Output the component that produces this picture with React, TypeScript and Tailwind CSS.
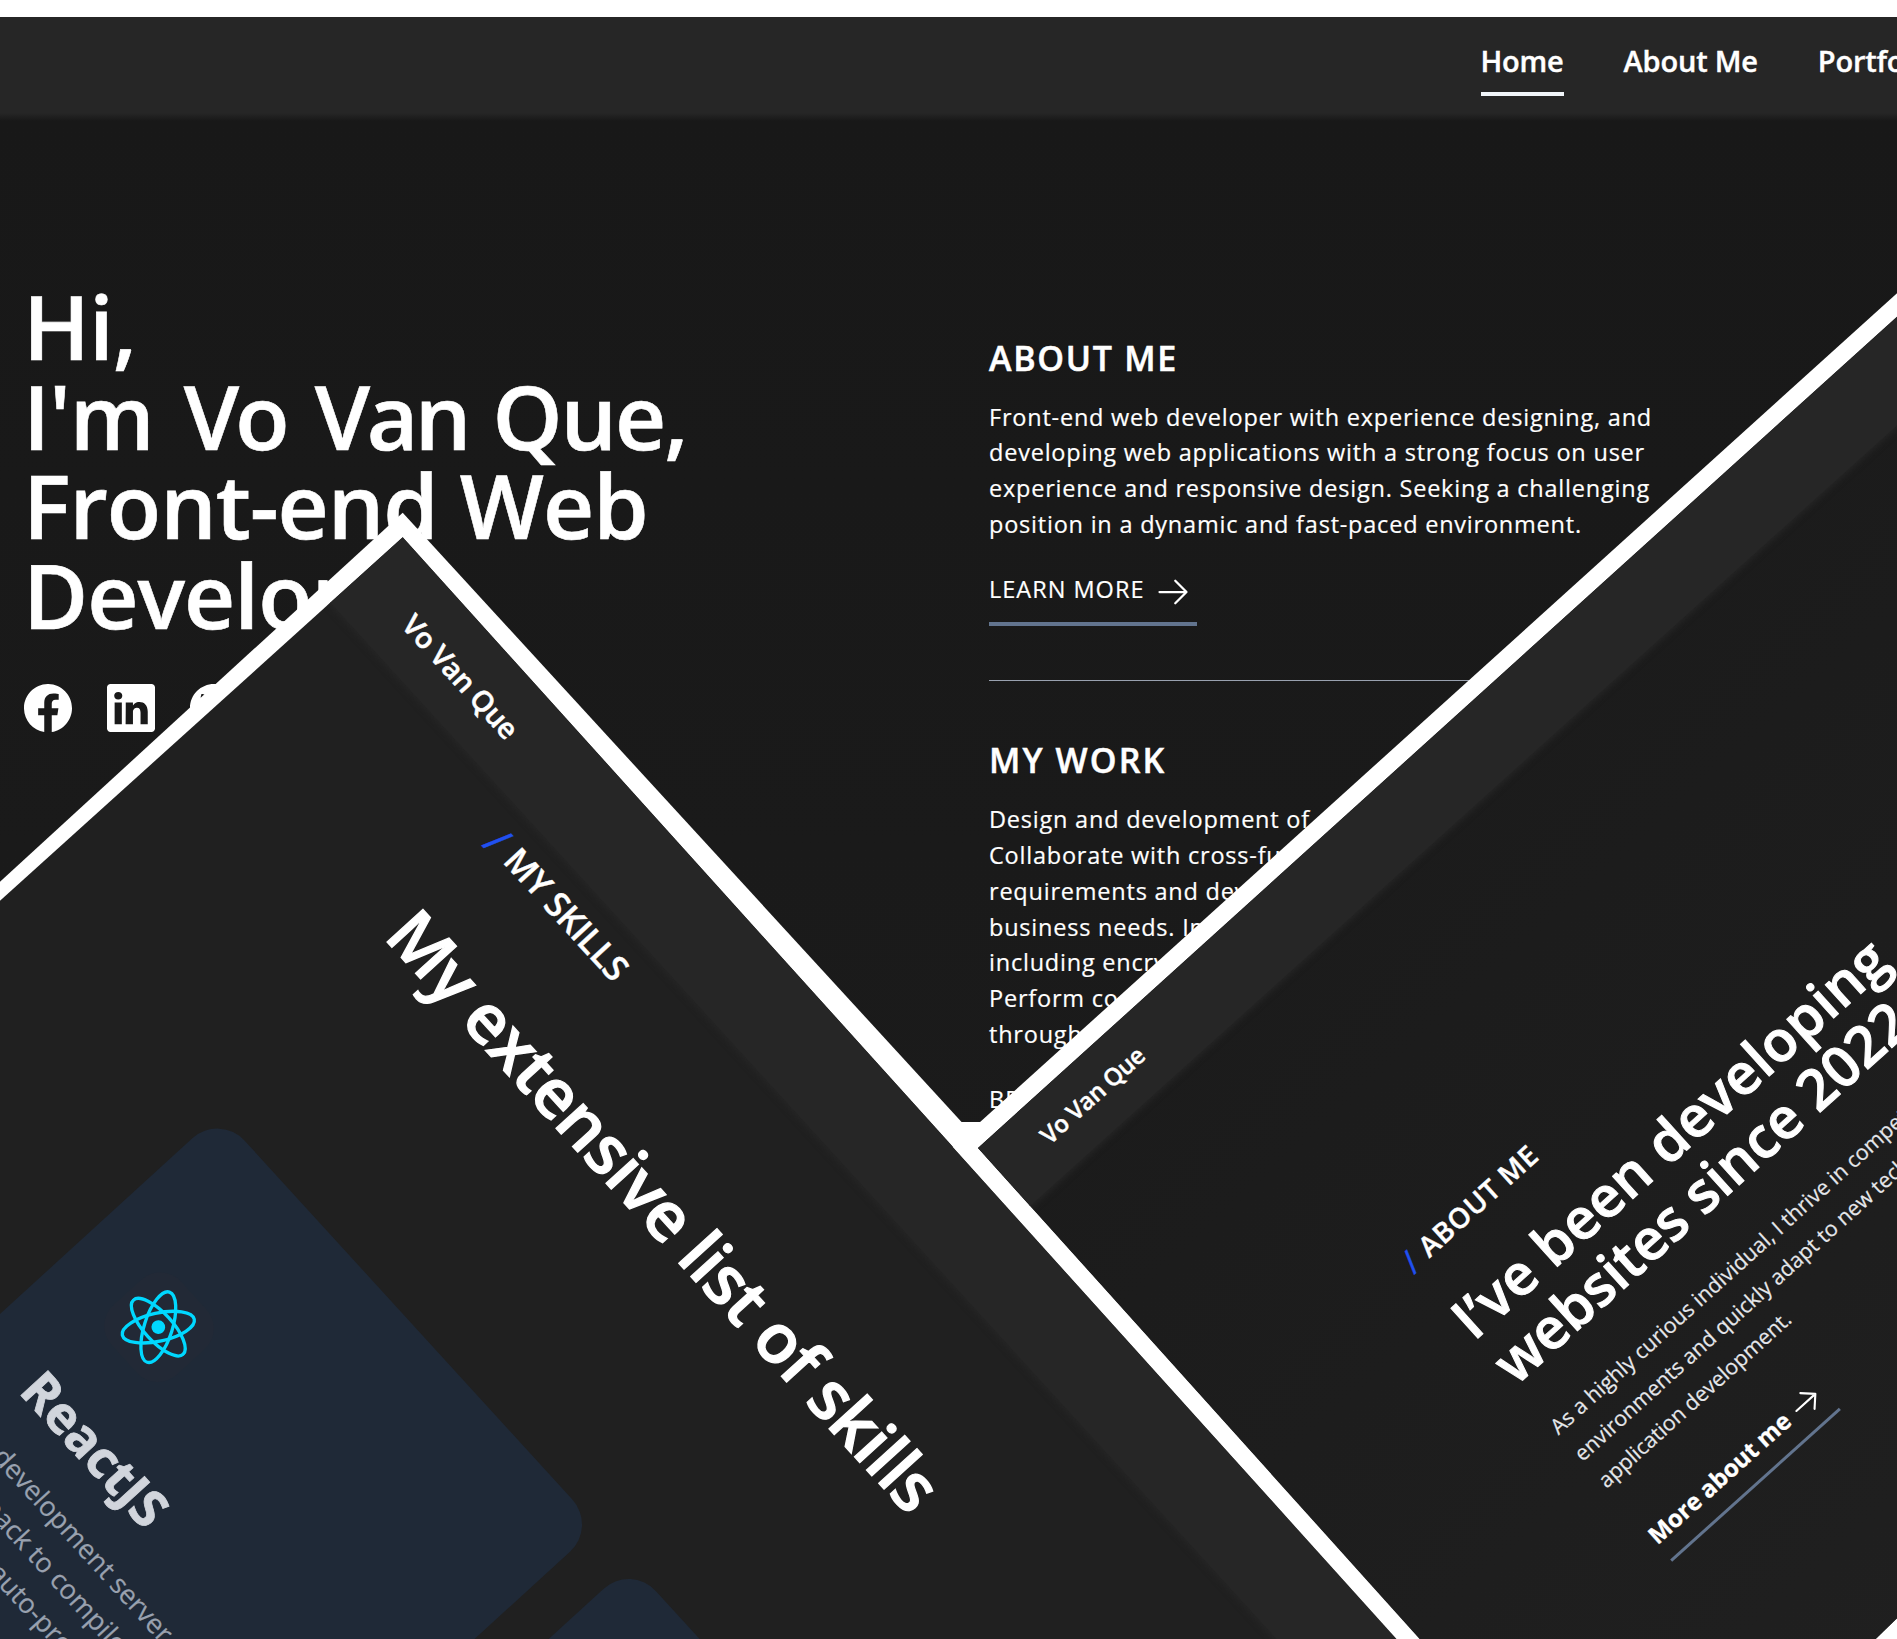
import React from "react";
import { BsFacebook, BsGithub, BsLinkedin } from "react-icons/bs";

function Arrow({ className }: { className: string }) {
  return (
    <svg viewBox="0 0 24 24" fill="none" stroke="currentColor" strokeWidth="1.5" strokeLinecap="round" strokeLinejoin="round" className={className}>
      <path d="M13.5 4.5 21 12l-7.5 7.5M21 12H3" />
    </svg>
  );
}

function ReactLogo() {
  return (
    <svg viewBox="-11.5 -11.5 23 23" className="h-[77px] w-[77px]" fill="none" stroke="#00d8ff" strokeWidth="1">
      <circle r="2.05" fill="#00d8ff" stroke="none" />
      <ellipse rx="11" ry="4.2" />
      <ellipse rx="11" ry="4.2" transform="rotate(60)" />
      <ellipse rx="11" ry="4.2" transform="rotate(120)" />
    </svg>
  );
}

const aboutLines = [
  "Front-end web developer with experience designing, and",
  "developing web applications with a strong focus on user",
  "experience and responsive design. Seeking a challenging",
  "position in a dynamic and fast-paced environment.",
];

const workLines = [
  "Design and development of",
  "Collaborate with cross-fun",
  "requirements and deve",
  "business needs. Imp",
  "including encryp",
  "Perform code",
  "through",
];

function Paragraph({ lines }: { lines: string[] }) {
  return (
    <div className="mt-[19.5px] text-[23.5px] leading-[35.8px] tracking-[0.78px] text-white [-webkit-text-stroke:0.2px]">
      {lines.map((l) => (
        <p key={l}>{l}</p>
      ))}
    </div>
  );
}

function HomePage() {
  return (
    <section className="h-[1121.5px] overflow-hidden bg-white pt-[17px] whitespace-nowrap">
      <nav className="flex h-[96px] items-start gap-[60px] bg-[#262626] pt-[22px] pl-[1480.5px] text-[29px] leading-[44px] font-semibold tracking-[-0.2px] [-webkit-text-stroke:0.4px]">
        <span className="border-b-4 border-slate-100 pb-[9px]">Home</span>
        <span>About Me</span>
        <span>Portfolio</span>
      </nav>
      <div className="flex h-[1100px] bg-linear-to-b from-[#262626] from-0% via-[#181818] via-[8px] to-[#1b1b1b]">
        <div className="w-[989px] shrink-0 pt-[168px] pl-[23px]">
          <h1 className="text-[89px] leading-[89.6px] font-semibold tracking-[-1px] [-webkit-text-stroke:0.6px]">
            <span className="block">Hi,</span>
            <span className="block">
              <span className="[word-spacing:8px]">I'm </span>
              <span className="tracking-[-4px] [word-spacing:10px]">Vo </span>
              <span className="tracking-[-3.5px] [word-spacing:5px]">Van </span>
              <span className="tracking-[-2px]">Que,</span>
            </span>
            <span className="block">Front-end Web</span>
            <span className="block">Develop</span>
          </h1>
          <div className="mt-[45px] ml-[1px] flex gap-[35px] text-[48px]">
            <BsFacebook />
            <BsLinkedin />
            <BsGithub />
          </div>
        </div>
        <div className="shrink-0 pt-[223px]">
          <h2 className="text-[34px] leading-[44px] font-semibold tracking-[1.7px] [-webkit-text-stroke:0.5px]">ABOUT ME</h2>
          <Paragraph lines={aboutLines} />
          <a className="mt-[29px] flex w-[208px] items-center gap-[11px] border-b-4 border-slate-500 pb-[14px] text-[23.5px] leading-[35.8px] tracking-[1px] [-webkit-text-stroke:0.2px]">
            LEARN MORE
            <Arrow className="relative top-[2px] h-9 w-9 shrink-0" />
          </a>
          <div className="mt-[54px] w-[700px] border-b border-gray-400" />
          <h2 className="mt-[57px] mb-[20.5px] text-[34px] leading-[44px] font-semibold tracking-[2.1px] [-webkit-text-stroke:0.5px]">MY WORK</h2>
          <Paragraph lines={workLines} />
          <p className="mt-[29.5px] text-[23.5px] leading-[35.8px] tracking-[1.1px] [-webkit-text-stroke:0.2px]">BRO</p>
        </div>
      </div>
    </section>
  );
}

function SkillsPage() {
  return (
    <>
      <div className="absolute inset-0 bg-white [clip-path:polygon(402.7px_512.7px,979px_1141px,1397px_1639px,0_1639px,0_881.7px)]" />
      <section className="absolute inset-0 overflow-hidden bg-[#202020] [clip-path:polygon(402.7px_537.3px,1397px_1639px,0_1639px,0_900.7px)]">
        <div className="absolute top-[537.3px] left-[402.7px] h-[1400px] w-[1800px] origin-top-left rotate-[47.6deg] whitespace-nowrap">
          <header className="-mt-5 -ml-5 h-[118px] bg-[#262626] pt-[50.5px] pl-[84px] text-[28.5px] leading-10 font-semibold tracking-[-0.35px] shadow-[0_2px_6px_#262626] [-webkit-text-stroke:0.5px]">
            Vo Van Que
          </header>
          <h3 className="mt-[10.5px] flex pl-[280.5px] text-[34.5px] leading-[48px] font-semibold tracking-[-0.55px] [-webkit-text-stroke:0.4px]">
            <span className="relative top-[1px] w-[26px] text-[42px] font-normal text-[#2050f0]">/</span>
            MY SKILLS
          </h3>
          <h2 className="mt-[62.5px] ml-[281.5px] origin-left rotate-[0.15deg] text-[68px] leading-[80px] font-semibold tracking-[-1px] [-webkit-text-stroke:1.2px]">My extensive list of skills</h2>
          <div className="mt-[225px] flex gap-[50px] pl-[301.5px]">
            <article className="h-[760px] w-[560.5px] rounded-[37px] bg-[#1f2937] pt-[142px] pl-[70px]">
              <div className="flex h-[94px] w-[94px] items-center justify-center rounded-[28px] bg-[#222936]">
                <ReactLogo />
              </div>
              <h4 className="mt-[50.5px] text-[51.5px] leading-[60px] font-bold tracking-[-0.2px] text-gray-300 [-webkit-text-stroke:0.8px]">ReactJS</h4>
              <div className="mt-[24.7px] text-[27px] leading-[40.5px] text-gray-400 [-webkit-text-stroke:0.2px]">
                <p className="pl-[9px]">a development server, uses</p>
                <p className="pl-[9px]">webpack to compile React</p>
                <p className="pl-[7px]">ES6 and auto-prefixes CSS</p>
              </div>
            </article>
            <article className="h-[760px] w-[560.5px] rounded-[37px] bg-[#1f2937]" />
          </div>
        </div>
      </section>
    </>
  );
}

function AboutPage() {
  return (
    <>
      <div className="absolute inset-0 bg-white [clip-path:polygon(1897px_293.3px,952.7px_1146.8px,1396.6px_1639px,1897px_1639px)]" />
      <section className="absolute inset-0 overflow-hidden bg-[#1c1c1c] [clip-path:polygon(978px_1147.9px,1897px_316.7px,1897px_1618.3px,1875.7px_1639px,1419.6px_1639px)]">
        <div className="absolute top-[1147.9px] left-[978px] h-[1100px] w-[1500px] origin-top-left -rotate-42 bg-linear-to-b from-[#1b1b1b] to-[#202020] whitespace-nowrap">
          <header className="-mt-5 -ml-5 h-[98px] bg-[#262626] pt-[39.7px] pl-[75px] text-[24px] leading-[34px] font-semibold tracking-[-0.35px] shadow-[0_2px_6px_#262626] [-webkit-text-stroke:0.4px]">
            Vo Van Que
          </header>
          <div className="pt-[275.5px] pl-[239px]">
            <h3 className="flex text-[28px] leading-[38px] font-semibold tracking-[0.7px] [-webkit-text-stroke:0.4px]">
              <span className="relative top-[1.5px] w-[22.5px] text-[33px] font-normal text-[#2050f0]">/</span>
              ABOUT ME
            </h3>
            <h2 className="mt-[32px] text-[56.5px] leading-[61px] font-semibold [-webkit-text-stroke:1px]">
              <span className="block tracking-[0.4px]">I’ve been developing</span>
              <span className="block pl-[1px] tracking-[-0.1px]">websites since 2022</span>
            </h2>
            <div className="mt-[30.5px] text-[21.4px] leading-9 text-gray-200 [-webkit-text-stroke:0.2px]">
              <p>As a highly curious individual, I thrive in competitive</p>
              <p>environments and quickly adapt to new technologies</p>
              <p className="tracking-[-0.1px]">application development.</p>
            </div>
            <a className="mt-[38.5px] flex w-[227px] items-center gap-[7px] border-b-[3px] border-slate-500 pb-2.5 text-[24px] leading-9 font-bold tracking-[-0.1px] [-webkit-text-stroke:0.3px]">
              More about me
              <Arrow className="relative top-[2px] h-[34px] w-[34px] shrink-0" />
            </a>
          </div>
        </div>
      </section>
    </>
  );
}

export default function App() {
  return (
    <main className="relative h-[1639px] w-[1897px] overflow-hidden bg-white font-['Open_Sans',sans-serif] text-white">
      <HomePage />
      <SkillsPage />
      <AboutPage />
    </main>
  );
}
